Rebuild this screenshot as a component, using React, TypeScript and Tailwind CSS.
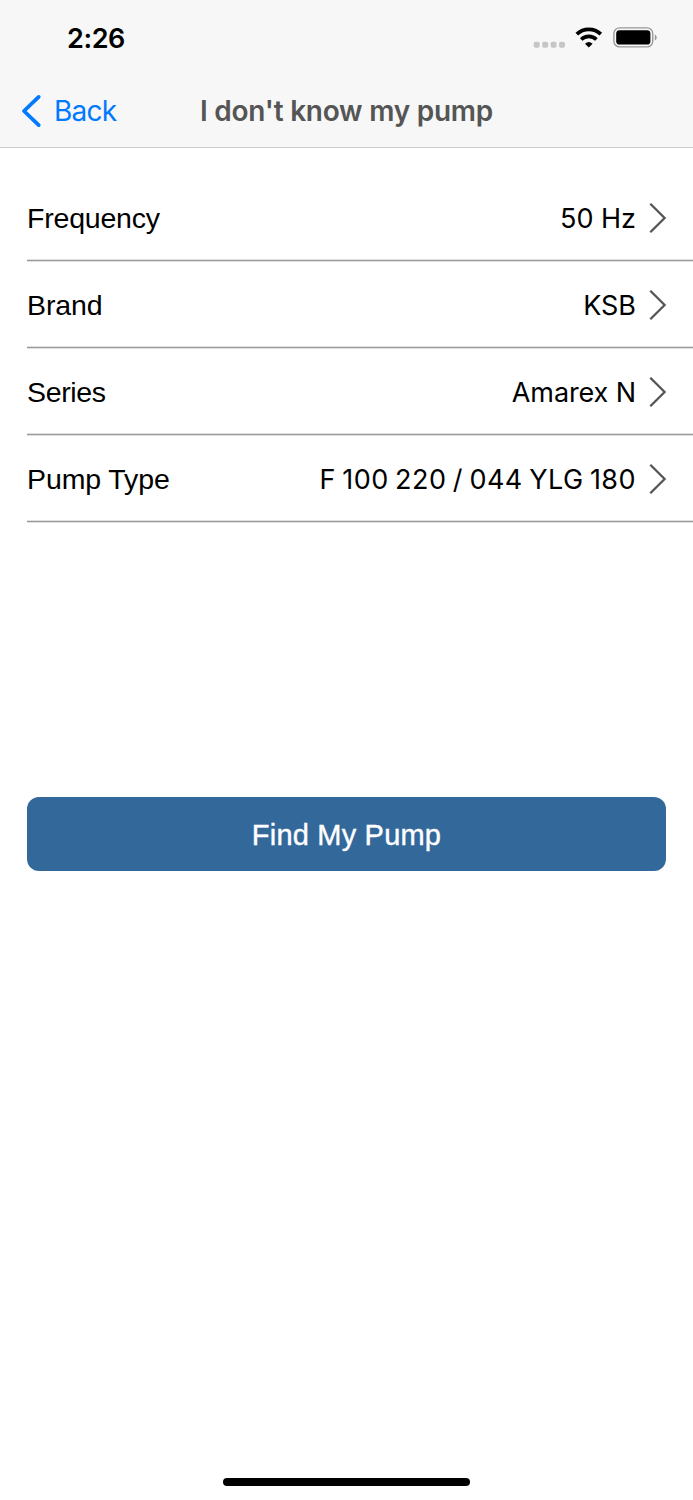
const rows = [
  { label: "Frequency", value: "50 Hz", labelClass: "tracking-[-0.2px]", valueClass: "tracking-[0px]" },
  { label: "Brand", value: "KSB", labelClass: "tracking-[-0.1px]", valueClass: "tracking-[0px]" },
  { label: "Series", value: "Amarex N", labelClass: "tracking-[-0.35px]", valueClass: "tracking-[-0.1px]" },
  { label: "Pump Type", value: "F 100 220 / 044 YLG 180", labelClass: "tracking-[-0.1px]", valueClass: "tracking-[0.45px] [word-spacing:-1.6px]" },
];

function StatusIcons() {
  return (
    <svg width="124" height="24" viewBox="0 0 124 24" aria-hidden="true">
      <g fill="#c6c6c6">
        <rect x="0.7" y="15.8" width="6" height="6" rx="1.8" />
        <rect x="9.2" y="15.8" width="6" height="6" rx="1.8" />
        <rect x="17.6" y="15.8" width="6" height="6" rx="1.8" />
        <rect x="26" y="15.8" width="6" height="6" rx="1.8" />
      </g>
      <g fill="none" stroke="#000" strokeWidth="3.7">
        <path d="M43.8 8.2A17.2 17.2 0 0 1 67.8 8.2" />
        <path d="M48.2 13.5A10.8 10.8 0 0 1 63.4 13.5" />
      </g>
      <path d="M52 17.7A5.8 5.8 0 0 1 59.6 17.7L55.8 21.5Z" />
      <rect x="80.9" y="1.9" width="38.8" height="19" rx="5.6" fill="none" stroke="#999" strokeWidth="1.4" />
      <rect x="83.2" y="4.2" width="34.2" height="14.4" rx="3.4" />
      <path d="M121.8 8.4C124.3 9.4 124.3 13.6 121.8 14.6Z" fill="#999" />
    </svg>
  );
}

export default function App() {
  return (
    <div className="flex h-[1500px] w-[693px] flex-col overflow-hidden bg-white font-['Inter',sans-serif] text-black">
      <header className="flex h-[148px] shrink-0 flex-col border-b border-[#cbcbcb] bg-[#f7f7f7]">
        <div className="flex h-[74px] items-start justify-between pt-[23px] pr-9 pl-[67px]">
          <span className="text-[27px] leading-8 font-semibold tracking-[-0.4px]">2:26</span>
          <div className="pt-[3px]">
            <StatusIcons />
          </div>
        </div>
        <nav className="grid h-[73px] grid-cols-[200px_1fr_200px] items-center">
          <button className="flex items-center gap-3 pl-[21px] text-[28px] tracking-[-0.8px] text-[#007aff]">
            <svg width="21" height="34" viewBox="0 0 21 34" fill="none" stroke="currentColor" strokeWidth="3.8" strokeLinecap="round" strokeLinejoin="round" aria-hidden="true">
              <path d="M17.7 2.9L3 17L17.7 31.1" />
            </svg>
            <span>Back</span>
          </button>
          <h1 className="text-center text-[28px] font-semibold tracking-[-0.25px] whitespace-nowrap text-[#555]">I don't know my pump</h1>
        </nav>
      </header>
      <main className="flex flex-1 flex-col pt-[26px]">
        <ul className="ml-[27px]">
          {rows.map((row) => (
            <li key={row.label} className="flex h-[87px] items-center justify-between border-b border-[#9b9b9b] pt-px pr-[26px] shadow-[inset_0_-1px_0_#e0e0e0,0_1px_0_#e0e0e0]">
              <span className={`pt-0.5 font-['Liberation_Sans',sans-serif] text-[28.5px] ${row.labelClass}`}>{row.label}</span>
              <span className="flex items-center gap-[13px]">
                <span className={`pt-1 text-[27px] ${row.valueClass}`}>{row.value}</span>
                <svg width="18" height="32" viewBox="0 0 18 32" fill="none" stroke="#555" strokeWidth="2.3" aria-hidden="true">
                  <path d="M1.3 1.7L15.6 16L1.3 30.3" />
                </svg>
              </span>
            </li>
          ))}
        </ul>
        <button className="mx-[27px] mt-[275px] h-[73.5px] rounded-xl bg-[#33689b] pt-[3px] font-['Liberation_Sans',sans-serif] text-[29px] tracking-[0.2px] text-white [-webkit-text-stroke:0.4px_white]">
          Find My Pump
        </button>
      </main>
      <footer className="flex h-[22px] justify-center">
        <div className="h-2 w-[247px] rounded-full bg-black" />
      </footer>
    </div>
  );
}
